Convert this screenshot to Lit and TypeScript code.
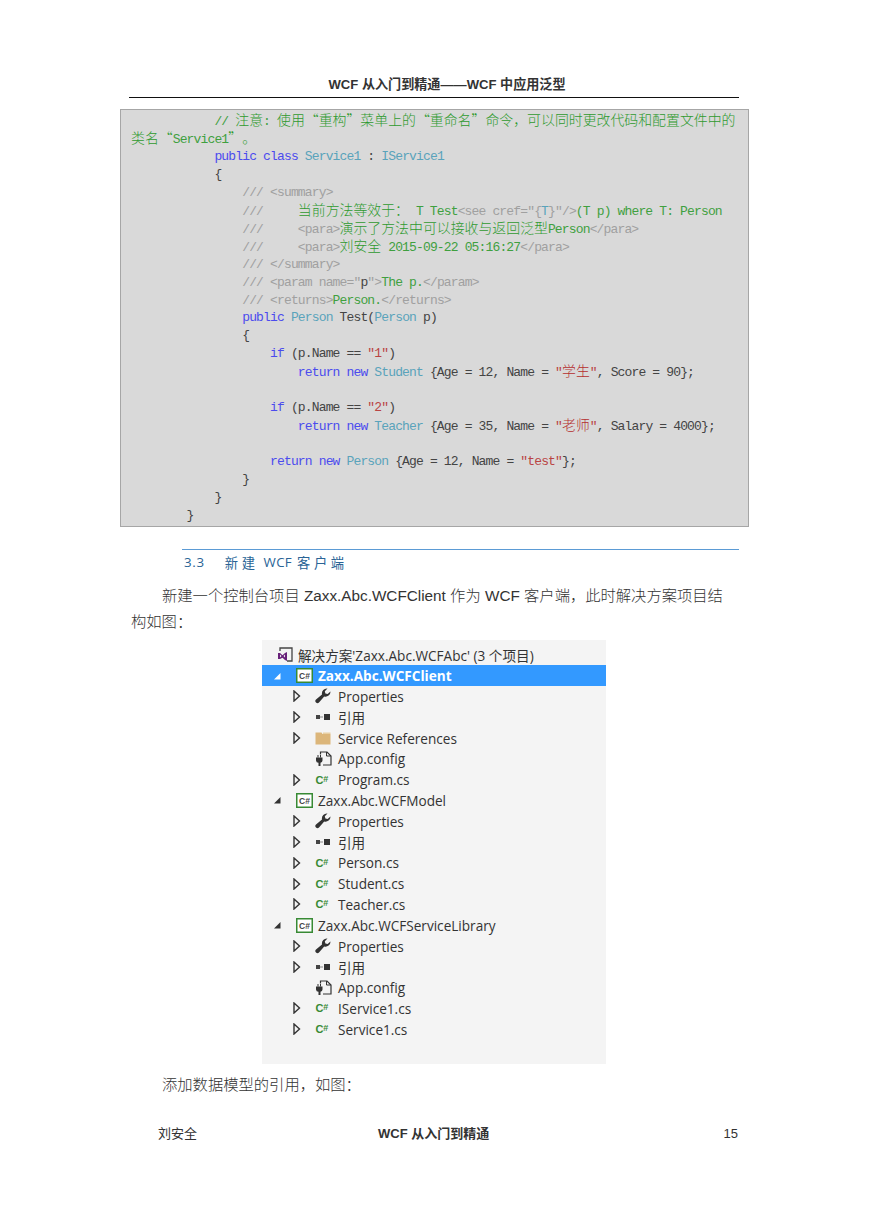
import { LitElement, html, css } from "lit";
import { customElement } from "lit/decorators.js";

type Seg = [string, string];
const G = "g", K = "k", T = "t", C = "c", S = "s", X = "x", Z = "gz", SZ = "sz";
const code: Seg[][] = [
  [[G, "            // "], [Z, "注意"], [G, ": "], [Z, "使用“重构”菜单上的“重命名”命令，可以同时更改代码和配置文件中的"]],
  [[Z, "类名“"], [G, "Service1"], [Z, "”。"]],
  [[K, "            public class "], [T, "Service1"], [X, " : "], [T, "IService1"]],
  [[X, "            {"]],
  [[C, "                /// <summary>"]],
  [[C, "                ///     "], [Z, "当前方法等效于："], [G, " T Test"], [C, '<see cref="'], [C, "{"], [T, "T"], [C, '}"/>'], [G, "(T p) where T: Person"]],
  [[C, "                ///     <para>"], [Z, "演示了方法中可以接收与返回泛型"], [G, "Person"], [C, "</para>"]],
  [[C, "                ///     <para>"], [Z, "刘安全"], [G, " 2015-09-22 05:16:27"], [C, "</para>"]],
  [[C, "                /// </summary>"]],
  [[C, '                /// <param name="'], [X, "p"], [C, '">'], [G, "The p."], [C, "</param>"]],
  [[C, "                /// <returns>"], [G, "Person."], [C, "</returns>"]],
  [[K, "                public "], [T, "Person"], [X, " Test("], [T, "Person"], [X, " p)"]],
  [[X, "                {"]],
  [[K, "                    if"], [X, " (p.Name == "], [S, '"1"'], [X, ")"]],
  [[K, "                        return new "], [T, "Student"], [X, " {Age = 12, Name = "], [S, '"'], [SZ, "学生"], [S, '"'], [X, ", Score = 90};"]],
  [[X, " "]],
  [[K, "                    if"], [X, " (p.Name == "], [S, '"2"'], [X, ")"]],
  [[K, "                        return new "], [T, "Teacher"], [X, " {Age = 35, Name = "], [S, '"'], [SZ, "老师"], [S, '"'], [X, ", Salary = 4000};"]],
  [[X, " "]],
  [[K, "                    return new "], [T, "Person"], [X, " {Age = 12, Name = "], [S, '"test"'], [X, "};"]],
  [[X, "                }"]],
  [[X, "            }"]],
  [[X, "        }"]],
];

type Row = { d: number; a: "" | "open" | "closed" | "dark"; i: string; t: string; sel?: boolean };
const rows: Row[] = [
  { d: 0, a: "", i: "vs", t: "解决方案'Zaxx.Abc.WCFAbc' (3 个项目)" },
  { d: 1, a: "open", i: "proj", t: "Zaxx.Abc.WCFClient", sel: true },
  { d: 2, a: "closed", i: "wrench", t: "Properties" },
  { d: 2, a: "closed", i: "ref", t: "引用" },
  { d: 2, a: "closed", i: "folder", t: "Service References" },
  { d: 2, a: "", i: "config", t: "App.config" },
  { d: 2, a: "closed", i: "cs", t: "Program.cs" },
  { d: 1, a: "dark", i: "proj", t: "Zaxx.Abc.WCFModel" },
  { d: 2, a: "closed", i: "wrench", t: "Properties" },
  { d: 2, a: "closed", i: "ref", t: "引用" },
  { d: 2, a: "closed", i: "cs", t: "Person.cs" },
  { d: 2, a: "closed", i: "cs", t: "Student.cs" },
  { d: 2, a: "closed", i: "cs", t: "Teacher.cs" },
  { d: 1, a: "dark", i: "proj", t: "Zaxx.Abc.WCFServiceLibrary" },
  { d: 2, a: "closed", i: "wrench", t: "Properties" },
  { d: 2, a: "closed", i: "ref", t: "引用" },
  { d: 2, a: "", i: "config", t: "App.config" },
  { d: 2, a: "closed", i: "cs", t: "IService1.cs" },
  { d: 2, a: "closed", i: "cs", t: "Service1.cs" },
];

function icon(kind: string) {
  switch (kind) {
    case "vs":
      return html`<svg width="18" height="16" viewBox="0 0 18 16"><path d="M4 4V1h12v13H11" fill="none" stroke="#444" stroke-width="1.300"/><path d="M2 6l2 0 2.500 2.200L9 6l2-1v9l-2-1-2.500-2.200L4 12H2zM4 7.500v3L5.500 9zM9 7.500L7.500 9 9 10.500z" fill="#68217a" fill-rule="evenodd"/></svg>`;
    case "proj":
      return html`<svg width="17" height="15" viewBox="0 0 17 15"><rect x="0.750" y="0.750" width="15.500" height="13.500" fill="#fff" stroke="#388a34" stroke-width="1.500"/><text x="8.500" y="10.500" text-anchor="middle" font-size="8.500" font-weight="700" fill="#444" font-family="'Liberation Sans',sans-serif">C#</text></svg>`;
    case "wrench":
      return html`<svg width="16" height="16" viewBox="0 0 16 16"><path d="M15.500 3.500a5 5 0 0 1-6.300 5L4 14.500a2.100 2.100 0 0 1-3-3L7 6.400A5 5 0 0 1 12.500.500L9.800 3.300l.6 2.200 2.200.6z" fill="#333"/></svg>`;
    case "ref":
      return html`<svg width="16" height="16" viewBox="0 0 16 16"><rect x="1" y="6" width="4" height="4" fill="#444"/><rect x="5" y="7.500" width="3" height="1" fill="#888"/><rect x="9" y="5" width="6" height="6" fill="#333"/></svg>`;
    case "folder":
      return html`<svg width="16" height="14" viewBox="0 0 16 14"><path d="M0.500 1.500h6l1 1.500h8v10.500H.500z" fill="#dcb67a"/><path d="M8 1.500h7.500V3H8z" fill="#e9d0a4"/></svg>`;
    case "config":
      return html`<svg width="17" height="16" viewBox="0 0 17 16"><path d="M5.500 3.500V1h6.500l4 4v9H8" fill="none" stroke="#333" stroke-width="1.200"/><path d="M11.500 1v4H16" fill="none" stroke="#333" stroke-width="1"/><path d="M1 6.500h6.500v3a2.500 2.500 0 0 1-2 2.300V15H3.500v-3.200a2.500 2.500 0 0 1-2.500-2.300z" fill="#333"/><path d="M3 6.500V4M5.500 6.500V4" stroke="#333" stroke-width="1"/></svg>`;
    case "cs":
      return html`<svg width="16" height="14" viewBox="0 0 16 14"><text x="0.500" y="11" font-size="11" font-weight="700" fill="#388a34" font-family="'Liberation Sans',sans-serif">C</text><text x="8.300" y="9" font-size="9" font-weight="700" fill="#388a34" font-family="'Liberation Sans',sans-serif">#</text></svg>`;
  }
  return "";
}

function arrow(a: Row["a"], sel?: boolean) {
  if (a === "closed")
    return html`<svg class="ar" width="8" height="12" viewBox="0 0 8 12"><path d="M1 1l5.500 5L1 11z" fill="none" stroke="#333" stroke-width="1.400"/></svg>`;
  if (a === "open" || a === "dark")
    return html`<svg class="ar" width="8" height="8" viewBox="0 0 8 8"><path d="M7.500 1v6.500H1z" fill=${sel ? "#fff" : "#333"}/></svg>`;
  return html`<span class="ar"></span>`;
}

// Splits a CJK run so each full-width punctuation mark keeps its own square cell.
function seg(c: string, t: string) {
  if (c !== Z && c !== SZ) return html`<span class=${c}>${t}</span>`;
  const parts = t.split(/([“”，。：])/).filter(Boolean);
  return html`<span class=${c}>${parts.map((p) =>
    /^[“”，。：]$/.test(p) ? html`<span class="cell">${p}</span>` : p
  )}</span>`;
}

@customElement("app-root")
export class AppRoot extends LitElement {
  static styles = css`
    :host { display: block; width: 869px; height: 1228px; background: #fff; overflow: hidden; color: #333; }
    .page { display: flex; flex-direction: column; width: 869px; height: 1228px; padding-top: 77px; box-sizing: border-box; font-family: "Liberation Sans", "Noto Sans CJK SC", sans-serif; }
    .head { margin: 0 130px 0 129px; padding-left: 26px; height: 20px; border-bottom: 1px solid #111; font-size: 13.100px; line-height: 16px; text-align: center; color: #333; font-weight: 600; }
    .code { margin: 11px 120px 0 120px; height: 418px; box-sizing: border-box; border: 1px solid #a6a6a6; background: #d9d9d9; padding: 2px 0 0 10px; overflow: hidden; }
    .ln { height: 17.960px; line-height: 17.960px; white-space: pre; font-family: "Liberation Mono", monospace; font-size: 13px; letter-spacing: -0.850px; }
    .ln .g { color: #3fa03f; }
    .ln .k { color: #4b4bee; }
    .ln .t { color: #5aa3bb; }
    .ln .c { color: #a0a0a0; }
    .ln .s { color: #b94444; }
    .ln .x { color: #444; }
    .ln .gz, .ln .sz { font-family: "Noto Sans CJK SC", sans-serif; font-size: 13.900px; line-height: 14px; letter-spacing: 0; font-variant-east-asian: full-width; font-weight: 300; }
    .ln .gz { color: #2e9a2e; }
    .ln .sz { color: #b52f2f; }
    .cell { display: inline-block; width: 13.900px; }
    .sec { margin: 22px 130px 0 182px; border-top: 1px solid #5b9bd5; padding: 0 0 0 2px; height: 24px; display: flex; align-items: center; color: #2a6496; font-size: 13.300px; font-family: "Open Sans", "Noto Sans CJK SC", sans-serif; }
    .sec .num { letter-spacing: 0.700px; margin-right: 20px; }
    .sec .wide { letter-spacing: 3.600px; }
    .sec .lat { letter-spacing: 0.300px; margin: 0 5px 0 5px; }
    p { margin: 0; font-size: 15.300px; line-height: 26px; color: #333; font-weight: 300; font-family: "Liberation Sans", "Noto Sans CJK SC", sans-serif; }
    .intro { margin: 9px 130px 0 131px; }
    .pi { padding-left: 31px; white-space: pre; }
    .pic { margin: 5px 0 0 262px; width: 344px; height: 424px; background: #f4f4f4; padding-top: 4.500px; box-sizing: border-box; font-family: "Open Sans", "Noto Sans CJK SC", sans-serif; font-size: 13.600px; }
    .row { height: 20.800px; display: flex; align-items: center; color: #333; white-space: pre; }
    .row.sel { background: #3399ff; color: #fff; font-weight: 700; }
    .d0 { padding-left: 14px; }
    .d1 { padding-left: 11px; }
    .d2 { padding-left: 31px; }
    .ar { width: 8px; display: block; flex: none; }
    .ic { flex: none; display: flex; align-items: center; justify-content: center; width: 18px; height: 16px; }
    .d1 .ic { margin-left: 14px; margin-right: 5px; }
    .d2 .ic { margin-left: 13px; margin-right: 6px; }
    .d0 .ic { margin-right: 4px; }
    .d0 .ar { display: none; }
    .tail { margin: 8px 0 0 162px; }
    .foot { margin: 28px 131px 0 158px; display: grid; grid-template-columns: 220px 1fr auto; font-size: 13px; line-height: 16px; color: #333; }
    .foot .mid { font-weight: 600; }
  `;
  render() {
    return html`<div class="page" lang="zh-CN">
      <div class="head">WCF 从入门到精通——WCF 中应用泛型</div>
      <div class="code">
        ${code.map((l) => html`<div class="ln">${l.map(([c, t]) => seg(c, t))}</div>`)}
      </div>
      <div class="sec"><span class="num">3.3</span><span class="wide">新建</span><span class="lat">WCF</span><span class="wide">客户端</span></div>
      <div class="intro">
        <p class="pi">新建一个控制台项目 Zaxx.Abc.WCFClient 作为 WCF 客户端，此时解决方案项目结</p>
        <p>构如图：</p>
      </div>
      <div class="pic">
        ${rows.map(
          (r) => html`<div class="row d${r.d} ${r.sel ? "sel" : ""}">${arrow(r.a, r.sel)}<span class="ic">${icon(r.i)}</span><span>${r.t}</span></div>`
        )}
      </div>
      <p class="tail">添加数据模型的引用，如图：</p>
      <div class="foot"><span>刘安全</span><span class="mid">WCF 从入门到精通</span><span>15</span></div>
    </div>`;
  }
}
